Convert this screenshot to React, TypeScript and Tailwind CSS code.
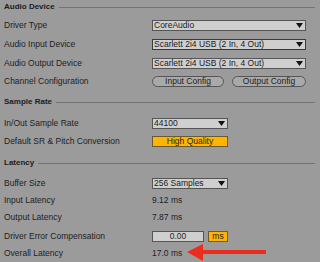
import React from "react";

const Tri = () => (
  <svg width="7" height="5" viewBox="0 0 7 5" className="shrink-0">
    <path d="M0 0H7L3.5 5Z" fill="#111" />
  </svg>
);

function Header({ title, h, mt }: { title: string; h: string; mt: string }) {
  return (
    <div className={`flex items-center ${h} ${mt}`}>
      <span className="text-[8px] font-bold text-[#1c1c1c] leading-none whitespace-nowrap">{title}</span>
      <div className="flex-1 h-px bg-[#747474] ml-[4px] mr-[5px]" />
    </div>
  );
}

function Row({ label, h, mt = "", children }: { label: string; h: string; mt?: string; children?: React.ReactNode }) {
  return (
    <div className={`flex items-center ${h} ${mt}`}>
      <div className="w-[148px] shrink-0 text-[8.5px] leading-none text-[#1e1e1e] whitespace-nowrap">{label}</div>
      {children}
    </div>
  );
}

function Drop({ text, w, focus = false }: { text: string; w: string; focus?: boolean }) {
  return (
    <div
      className={`${w} h-[11px] flex items-center justify-between pl-[1px] pr-[2px] bg-[#cfcfcf] ${
        focus ? "border-[1.5px] border-[#3a3a3a]" : "border border-[#555]"
      }`}
    >
      <span className="text-[8.5px] leading-none text-[#1a1a1a] whitespace-nowrap">{text}</span>
      <Tri />
    </div>
  );
}

export default function App() {
  return (
    <div
      className="relative w-[320px] h-[262px] overflow-hidden bg-[#9b9b9b] pl-[4px]"
      style={{ fontFamily: '"Liberation Sans", Arial, sans-serif' }}
    >
      <Header title="Audio Device" h="h-[14px]" mt="mt-0" />
      <Row label="Driver Type" h="h-[18px]" mt="mt-[2px]">
        <Drop text="CoreAudio" w="w-[154px]" />
      </Row>
      <Row label="Audio Input Device" h="h-[20px]">
        <Drop text="Scarlett 2i4 USB (2 In, 4 Out)" w="w-[154px]" focus />
      </Row>
      <Row label="Audio Output Device" h="h-[18px]">
        <Drop text="Scarlett 2i4 USB (2 In, 4 Out)" w="w-[154px]" />
      </Row>
      <Row label="Channel Configuration" h="h-[18px]">
        <div className="flex gap-[8px]">
          <div className="w-[72px] h-[11px] rounded-full border border-[#555] bg-[#a9a9a9] flex items-center justify-center text-[8.5px] leading-none text-[#1e1e1e]">
            Input Config
          </div>
          <div className="w-[74px] h-[11px] rounded-full border border-[#555] bg-[#a9a9a9] flex items-center justify-center text-[8.5px] leading-none text-[#1e1e1e]">
            Output Config
          </div>
        </div>
      </Row>

      <Header title="Sample Rate" h="h-[14px]" mt="mt-[5px]" />
      <Row label="In/Out Sample Rate" h="h-[18px]" mt="mt-[5px]">
        <Drop text="44100" w="w-[76px]" />
      </Row>
      <Row label="Default SR & Pitch Conversion" h="h-[18px]">
        <div className="w-[76px] h-[11px] bg-[#ffb400] border border-[#6a5a30] flex items-center justify-center text-[8.5px] leading-none text-[#1e1e1e]">
          High Quality
        </div>
      </Row>

      <Header title="Latency" h="h-[14px]" mt="mt-[6px]" />
      <Row label="Buffer Size" h="h-[18px]" mt="mt-[4px]">
        <Drop text="256 Samples" w="w-[76px]" />
      </Row>
      <Row label="Input Latency" h="h-[17px]">
        <span className="text-[8.5px] leading-none text-[#1e1e1e]">9.12 ms</span>
      </Row>
      <Row label="Output Latency" h="h-[17px]">
        <span className="text-[8.5px] leading-none text-[#1e1e1e]">7.87 ms</span>
      </Row>
      <Row label="Driver Error Compensation" h="h-[18px]" mt="mt-[1px]">
        <div className="flex gap-[4px]">
          <div className="w-[52px] h-[11px] bg-[#cfcfcf] border border-[#555] flex items-center justify-center text-[8.5px] leading-none text-[#1e1e1e]">
            0.00
          </div>
          <div className="w-[20px] h-[11px] bg-[#ffb400] border border-[#6a5a30] flex items-center justify-center text-[8.5px] leading-none text-[#1e1e1e]">
            ms
          </div>
        </div>
      </Row>
      <Row label="Overall Latency" h="h-[17px]">
        <span className="text-[8.5px] leading-none text-[#1e1e1e]">17.0 ms</span>
      </Row>

      <svg className="absolute left-[186px] top-[243px]" width="82" height="19" viewBox="0 0 82 19">
        <path d="M1 9 L17 1 L17 7 L80 7 L80 11 L17 11 L17 18 Z" fill="#ec2c1c" />
      </svg>
    </div>
  );
}
